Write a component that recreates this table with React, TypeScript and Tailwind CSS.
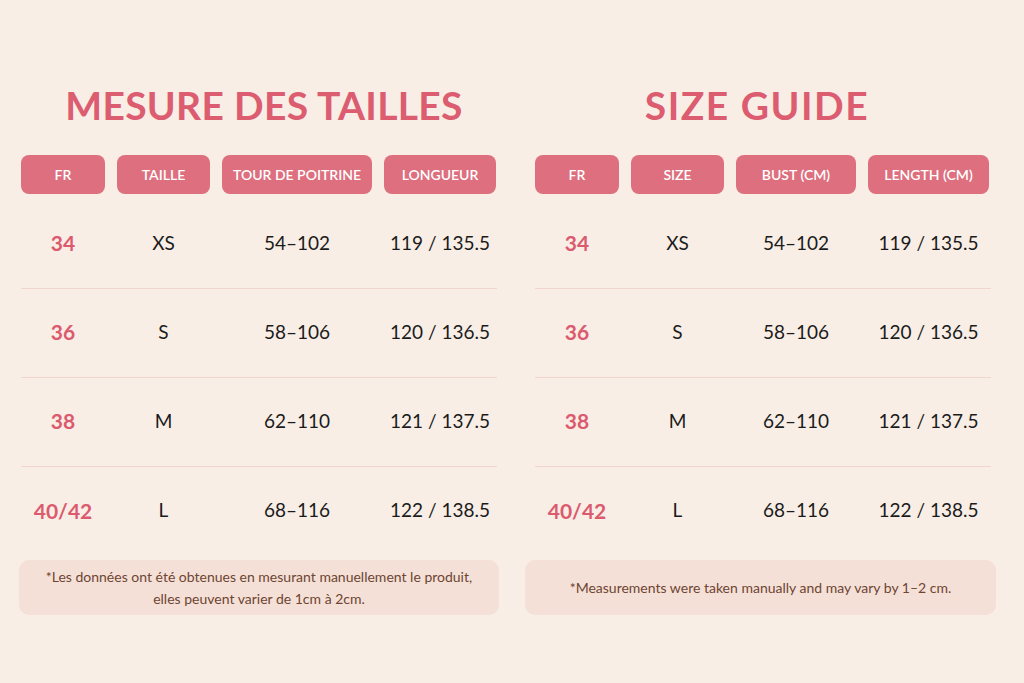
import React from "react";

type Table = {
  title: string;
  titleShift: string;
  gridShift: string;
  cols: number[];
  headers: string[];
  note: string[];
  width: string;
};

const rows = [
  ["34", "XS", "54–102", "119 / 135.5"],
  ["36", "S", "58–106", "120 / 136.5"],
  ["38", "M", "62–110", "121 / 137.5"],
  ["40/42", "L", "68–116", "122 / 138.5"],
];

const tables: Table[] = [
  {
    title: "MESURE DES TAILLES",
    titleShift: "pl-[10px] tracking-[0.3px]",
    gridShift: "pl-[2px] pr-[2px]",
    cols: [84, 93, 150, 112],
    headers: ["FR", "TAILLE", "TOUR DE POITRINE", "LONGUEUR"],
    note: [
      "*Les données ont été obtenues en mesurant manuellement le produit,",
      "elles peuvent varier de 1cm à 2cm.",
    ],
    width: "w-[480px]",
  },
  {
    title: "SIZE GUIDE",
    titleShift: "pr-[7px] tracking-[1.5px]",
    gridShift: "pl-[10px] pr-[5px]",
    cols: [84, 93, 120, 121],
    headers: ["FR", "SIZE", "BUST (CM)", "LENGTH (CM)"],
    note: ["*Measurements were taken manually and may vary by 1–2 cm."],
    width: "w-[471px]",
  },
];

function SizeTable({ t }: { t: Table }) {
  const template = t.cols.map((c) => `${c}px`).join(" ");
  return (
    <div className={`flex flex-col ${t.width}`}>
      <h1
        className={`h-[70px] text-center text-[39px] font-bold leading-[70px] text-[#dc5c70] ${t.titleShift}`}
      >
        {t.title}
      </h1>
      <div className={`mt-[15px] ${t.gridShift}`}>
        <div className="grid gap-x-3" style={{ gridTemplateColumns: template }}>
          {t.headers.map((h) => (
            <div
              key={h}
              className="flex h-[39px] items-center justify-center rounded-[8px] bg-[#dd6f7e] text-[14px] font-semibold text-white"
            >
              {h}
            </div>
          ))}
        </div>
        <div className="mt-[6px]">
          {rows.map((r, i) => (
            <div
              key={r[0]}
              className={`grid h-[89px] items-center gap-x-3 ${
                i < rows.length - 1 ? "border-b border-[#f0d6cd]" : ""
              }`}
              style={{ gridTemplateColumns: template }}
            >
              {r.map((cell, j) => (
                <div
                  key={j}
                  className={
                    j === 0
                      ? "pb-[2px] text-center text-[21px] font-bold text-[#dc5a6e]"
                      : "pb-[2px] text-center text-[19px] text-[#1b1b1b]"
                  }
                >
                  {cell}
                </div>
              ))}
            </div>
          ))}
        </div>
      </div>
      <div className="mt-[4px] flex h-[55px] flex-col items-center justify-center rounded-[10px] bg-[#f5e0d7] text-[14px] leading-[22px] text-[#6d4532]">
        {t.note.map((l) => (
          <div key={l}>{l}</div>
        ))}
      </div>
    </div>
  );
}

export default function App() {
  return (
    <div
      className="h-[683px] w-[1024px] bg-[#f8eee6]"
      style={{ fontFamily: "Lato, 'Noto Sans', sans-serif" }}
    >
      <div className="flex gap-[26px] pl-[19px] pt-[70px]">
        {tables.map((t) => (
          <SizeTable key={t.title} t={t} />
        ))}
      </div>
    </div>
  );
}
